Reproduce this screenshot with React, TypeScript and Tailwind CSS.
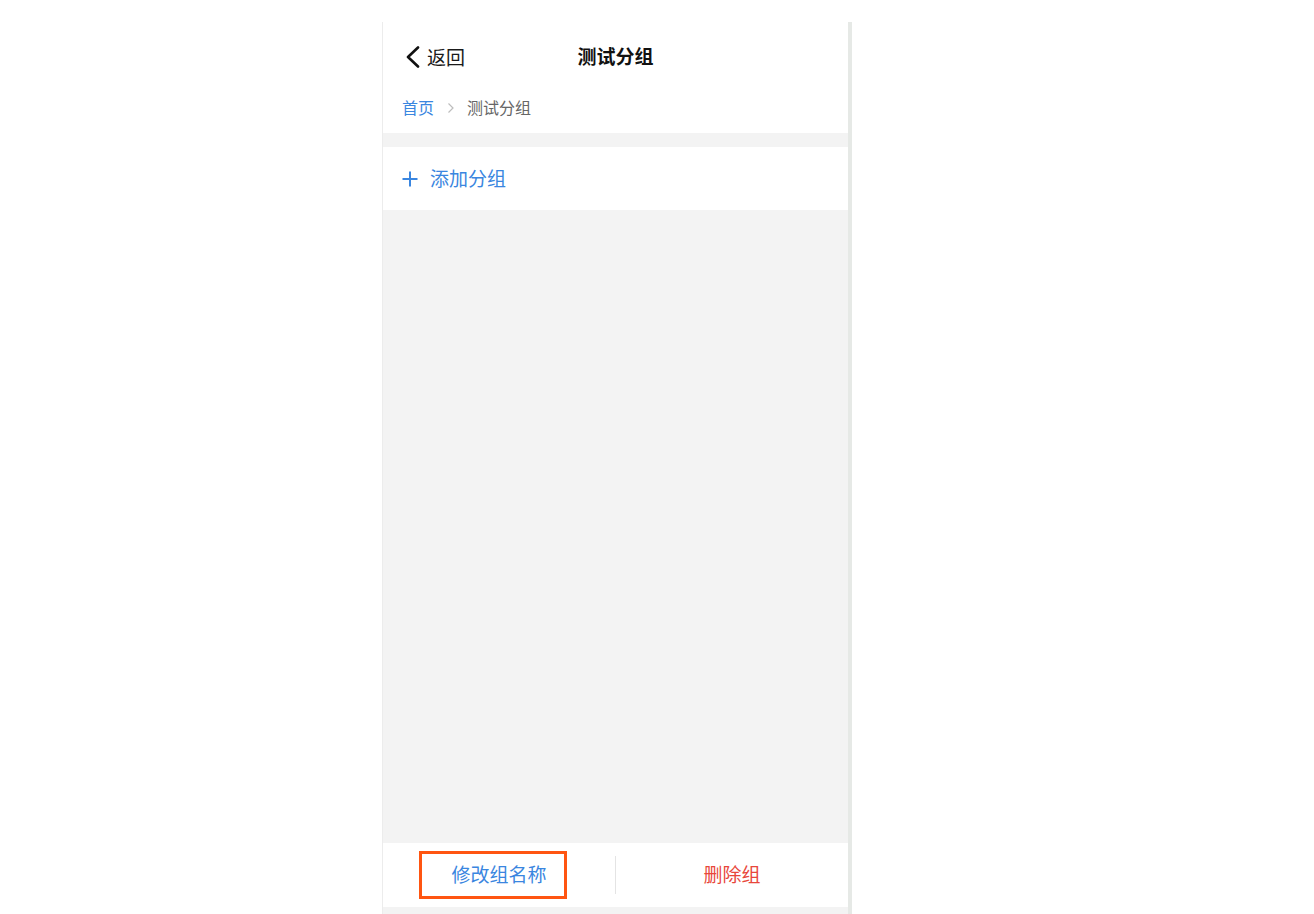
import React from "react";

export default function App() {
  const font = { fontFamily: '"Noto Sans CJK SC", "Noto Sans", sans-serif' };
  return (
    <div className="w-[1314px] h-[914px] bg-white overflow-hidden" style={font}>
      <div className="ml-[382px] mt-[22px] w-[470px] h-[892px] flex border-l border-[#ececec]">
        <div className="w-[465px] h-full flex flex-col bg-[#f3f3f3]">
          {/* header */}
          <div className="h-[70px] bg-white relative flex items-center">
            <div className="flex items-center pl-[21px]">
              <svg width="17" height="22" viewBox="0 0 17 22" className="mr-[6px]">
                <polyline points="14,1.5 4,11 14,20.5" fill="none" stroke="#111" strokeWidth="2.6" strokeLinecap="round" strokeLinejoin="round" />
              </svg>
              <span className="text-[19px] text-[#1a1a1a] leading-6">返回</span>
            </div>
            <div className="absolute inset-x-0 top-0 h-full flex items-center justify-center pointer-events-none">
              <span className="text-[19px] font-bold text-[#111] leading-6 -mt-[2px]">测试分组</span>
            </div>
          </div>
          {/* breadcrumb */}
          <div className="h-[41px] bg-white flex items-start pt-[3px] pl-[19px]">
            <span className="text-[16px] leading-6 text-[#3a86e0]">首页</span>
            <svg width="8" height="12" viewBox="0 0 8 12" className="ml-[13px] mr-[12px] mt-[7px]">
              <polyline points="1.5,1.5 6,6 1.5,10.5" fill="none" stroke="#bdbdbd" strokeWidth="1.2" />
            </svg>
            <span className="text-[16px] leading-6 text-[#666]">测试分组</span>
          </div>
          <div className="h-[14px] bg-[#f3f3f3]" />
          {/* add group */}
          <div className="h-[63px] bg-white flex items-center pl-[19px]">
            <svg width="16" height="16" viewBox="0 0 16 16" className="mr-[12px]">
              <path d="M8 0.5V15.5M0.5 8H15.5" stroke="#3a86e0" strokeWidth="2" fill="none" />
            </svg>
            <span className="text-[19px] leading-6 text-[#3a86e0] -mt-[2px]">添加分组</span>
          </div>
          <div className="flex-1 bg-[#f3f3f3]" />
          {/* bottom bar */}
          <div className="h-[64px] bg-white flex items-center relative">
            <div className="flex-1 flex items-center justify-center">
              <span className="text-[19px] leading-6 text-[#3a86e0] -mt-[2px]">修改组名称</span>
            </div>
            <div className="w-px h-[38px] bg-[#e4e4e4]" />
            <div className="flex-1 flex items-center justify-center">
              <span className="text-[19px] leading-6 text-[#e8473b] -mt-[2px]">删除组</span>
            </div>
            <div className="absolute left-[36px] top-[8px] w-[148px] h-[48px] border-[3px] border-[#ff5511]" />
          </div>
          <div className="h-[7px] bg-[#f3f3f3] shrink-0" />
        </div>
        <div className="w-[4px] h-full bg-[#e6e9e6]" />
      </div>
    </div>
  );
}
